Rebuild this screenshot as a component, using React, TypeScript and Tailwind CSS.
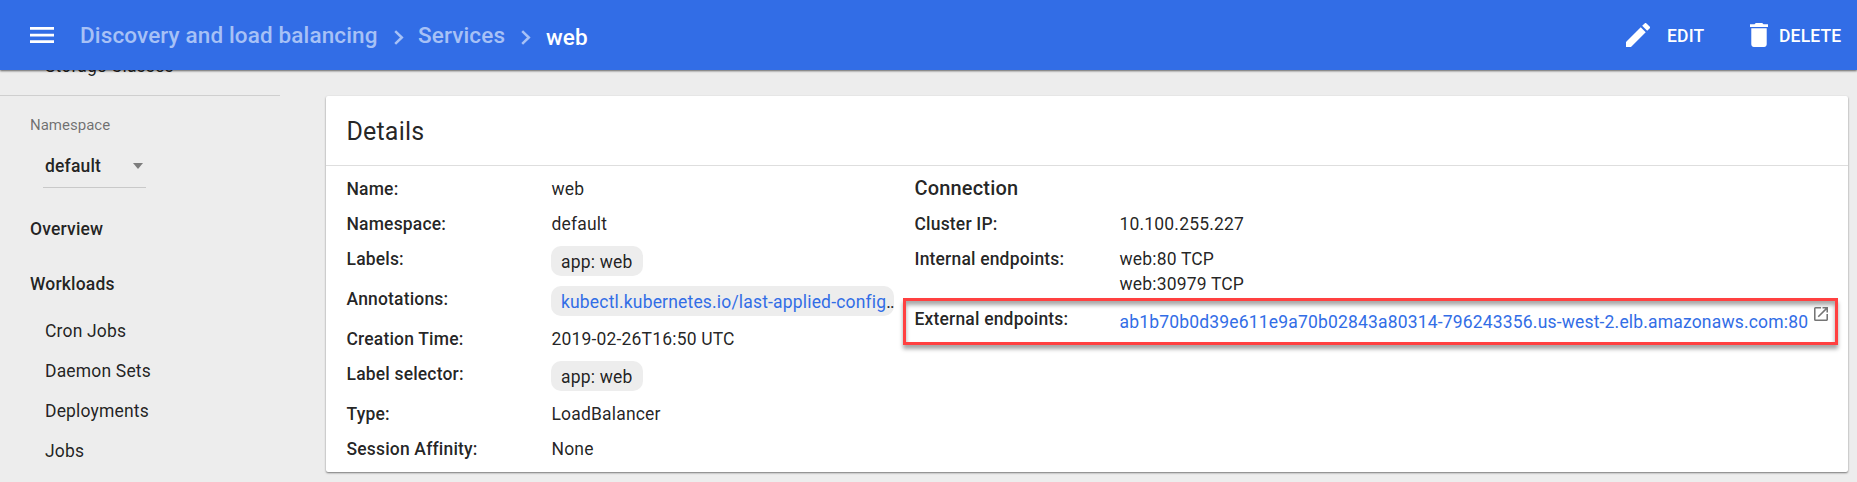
import type { ReactNode } from "react";

function Chevron({ className }: { className: string }) {
  return (
    <svg viewBox="0 0 10 15" className={`h-[15px] w-2.5 ${className}`} fill="none" stroke="#a7c1f6" strokeWidth="2.5">
      <path d="M1.200 1.200l6.600 6.300-6.600 6.300" />
    </svg>
  );
}

function Row({ label, tall, children }: { label: string; tall?: boolean; children: ReactNode }) {
  return (
    <div className={`flex items-start pb-1 pt-1.5 ${tall ? "h-10" : ""}`}>
      <div className="w-[205px] shrink-0 font-medium">{label}</div>
      <div className="min-w-0 text-black/87">{children}</div>
    </div>
  );
}

function Chip({ children, className = "w-[92px]" }: { children: ReactNode; className?: string }) {
  return (
    <div className={`-ml-[0.5px] -mt-px h-[30px] whitespace-nowrap rounded-[10px] bg-[#ededed] pl-2.5 leading-[33px] ${className}`}>
      {children}
    </div>
  );
}

const workloads = ["Cron Jobs", "Daemon Sets", "Deployments", "Jobs"];

export default function App() {
  return (
    <div className="flex h-[482px] w-[1857px] flex-col overflow-hidden bg-[#ededed] font-[Roboto,sans-serif] text-[17.5px] leading-[25px] tracking-[0.01em] text-black/87">
      <header className="relative z-10 flex h-[70px] shrink-0 items-center bg-[#326de6] pl-[30px] text-[22.5px] font-medium tracking-[0.13px] text-[#a7c1f6] shadow-[0_1px_2px_rgba(0,0,0,0.6)]">
        <svg viewBox="0 0 24 16" className="h-4 w-6" fill="#fff">
          <path d="M0 0h24v2.700H0zM0 6.700h24v2.700H0zM0 13.300h24V16H0z" />
        </svg>
        <span className="ml-[26px] w-[298px] whitespace-nowrap">Discovery and load balancing</span>
        <Chevron className="ml-[16px] mt-[5px]" />
        <span className="ml-[14px] w-[87px]">Services</span>
        <Chevron className="ml-[16px] mt-[5px]" />
        <span className="ml-[15px] mt-[5px] text-white">web</span>
        <div className="ml-auto flex items-center text-[17.5px] tracking-[0.01em] text-white">
          <svg viewBox="3 3 18 18" className="h-6 w-6" fill="#fff">
            <path d="M3 17.250V21h3.750L17.810 9.940l-3.750-3.750L3 17.250zM20.710 7.040a1 1 0 0 0 0-1.410l-2.340-2.340a1 1 0 0 0-1.410 0l-1.830 1.830 3.750 3.750 1.830-1.830z" />
          </svg>
          <span className="ml-[17px] mt-0.5 w-[37px]">EDIT</span>
          <svg viewBox="5 3 14 18" className="ml-[46px] h-6 w-[18px]" fill="#fff" preserveAspectRatio="none">
            <path d="M6 19c0 1.100.9 2 2 2h8c1.100 0 2-.9 2-2V7H6v12zM19 4h-3.500l-1-1h-5l-1 1H5v2h14V4z" />
          </svg>
          <span className="ml-[11px] mt-0.5 w-[78px]">DELETE</span>
        </div>
      </header>
      <div className="flex min-h-0 flex-1">
        <nav className="w-[280px] shrink-0">
          <div className="-mt-4 h-[41px] pl-[45px]">Storage Classes</div>
          <div className="h-px bg-[#cfcfcf]" />
          <div className="ml-[30px] mt-[17px] text-[15px] tracking-normal text-black/54">Namespace</div>
          <div className="ml-[43px] mt-4 flex h-[34px] w-[103px] items-start justify-between border-b border-[#c9c9c9] pl-0.5 pr-[3px] font-medium">
            <span>default</span>
            <svg viewBox="0 0 10 6" className="mt-[9px] h-1.5 w-2.5" fill="#7d7d7d">
              <path d="M0 0h10L5 6z" />
            </svg>
          </div>
          <div className="ml-[30px] mt-[29px] font-medium">Overview</div>
          <div className="ml-[30px] mt-[30px] font-medium">Workloads</div>
          <ul className="ml-[45px] mt-[22px] flex flex-col gap-[15px]">
            {workloads.map((w) => (
              <li key={w}>{w}</li>
            ))}
          </ul>
        </nav>
        <main className="ml-[46px] mt-[26px] h-[376px] w-[1522px] rounded-[2px] bg-white shadow-[0_1px_2px_rgba(0,0,0,0.5)]">
          <h1 className="flex h-[70px] items-center border-b border-[#dedede] pl-[20.5px] pt-0.5 text-[25px]">Details</h1>
          <div className="flex pl-[20.5px] pt-[5px]">
            <section className="w-[568px] shrink-0">
              <Row label="Name:">web</Row>
              <Row label="Namespace:">default</Row>
              <Row label="Labels:" tall><Chip>app: web</Chip></Row>
              <Row label="Annotations:" tall>
                <Chip className="w-[343px]">
                  <span className="text-[#326de6]">kubectl.kubernetes.io/last-applied-config</span>
                  <span className="tracking-[-0.04em]">..</span>
                </Chip>
              </Row>
              <Row label="Creation Time:">2019-02-26T16:50 UTC</Row>
              <Row label="Label selector:" tall><Chip>app: web</Chip></Row>
              <Row label="Type:">LoadBalancer</Row>
              <Row label="Session Affinity:">None</Row>
            </section>
            <section className="w-[922px]">
              <h2 className="h-[35px] py-[5px] text-[20px] font-medium">Connection</h2>
              <Row label="Cluster IP:">10.100.255.227</Row>
              <Row label="Internal endpoints:">
                web:80 TCP
                <br />
                web:30979 TCP
              </Row>
              <div className="-ml-[11.5px] -mt-[3px] h-[47px] w-[935px] border-[3px] border-[#ff4040] pl-[8.5px] shadow-[0_4px_4px_rgba(0,0,0,0.35),inset_0_4px_4px_rgba(0,0,0,0.35)]">
                <Row label="External endpoints:">
                  <div className="flex whitespace-nowrap">
                    <a className="mt-[3px] w-[688px] text-[#326de6]">ab1b70b0d39e611e9a70b02843a80314-796243356.us-west-2.elb.amazonaws.com:80</a>
                    <svg viewBox="3 3 18 18" className="ml-[6.500px] h-[14px] w-[14px]" fill="#757575">
                      <path d="M19 19H5V5h7V3H5a2 2 0 0 0-2 2v14a2 2 0 0 0 2 2h14c1.100 0 2-.9 2-2v-7h-2v7zM14 3v2h3.590l-9.830 9.830 1.410 1.410L19 6.410V10h2V3h-7z" />
                    </svg>
                  </div>
                </Row>
              </div>
            </section>
          </div>
        </main>
      </div>
    </div>
  );
}
